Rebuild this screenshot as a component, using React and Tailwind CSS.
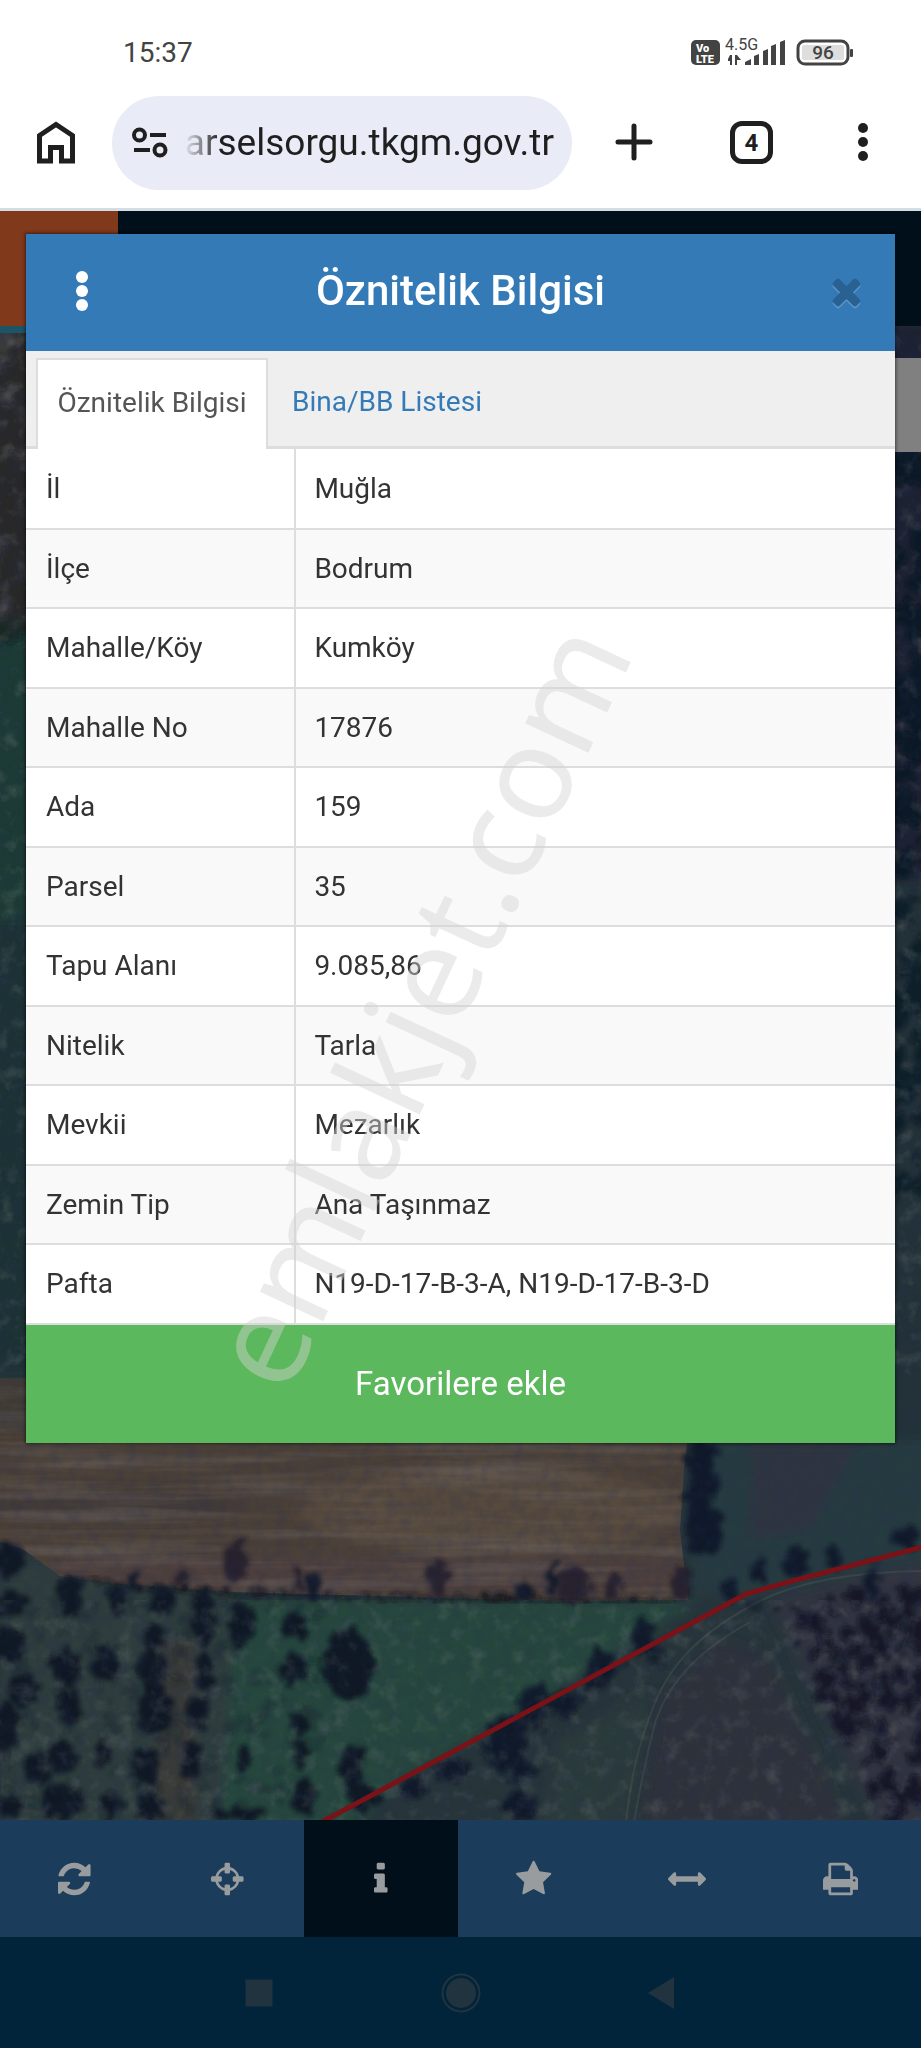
import React from "react";

const rows = [
  ["İl", "Muğla"],
  ["İlçe", "Bodrum"],
  ["Mahalle/Köy", "Kumköy"],
  ["Mahalle No", "17876"],
  ["Ada", "159"],
  ["Parsel", "35"],
  ["Tapu Alanı", "9.085,86"],
  ["Nitelik", "Tarla"],
  ["Mevkii", "Mezarlık"],
  ["Zemin Tip", "Ana Taşınmaz"],
  ["Pafta", "N19-D-17-B-3-A, N19-D-17-B-3-D"],
];

const glyphs = {
  refresh: [
    1536,
    "M1511 1056q0 5-1 7-64 268-268 434.5t-478 166.5q-146 0-282.5-55t-243.5-157l-129 129q-19 19-45 19t-45-19-19-45v-448q0-26 19-45t45-19h448q26 0 45 19t19 45-19 45l-137 137q71 66 161 102t187 36q134 0 250-65t186-179q11-17 53-117 8-23 30-23h192q13 0 22.5 9.5t9.5 22.5zm25-800v448q0 26-19 45t-45 19h-448q-26 0-45-19t-19-45 19-45l138-138q-148-137-349-137-134 0-250 65t-186 179q-11 17-53 117-8 23-30 23h-199q-13 0-22.5-9.5t-9.5-22.5v-7q65-268 270-434.5t480-166.5q146 0 284 55.5t245 156.5l130-129q19-19 45-19t45 19 19 45z",
  ],
  crosshairs: [
    1536,
    "M1197 1024h-109q-26 0-45-19t-19-45v-128q0-26 19-45t45-19h109q-32-108-112.5-188.5t-188.5-112.5v109q0 26-19 45t-45 19h-128q-26 0-45-19t-19-45v-109q-108 32-188.5 112.5t-112.5 188.5h109q26 0 45 19t19 45v128q0 26-19 45t-45 19h-109q32 108 112.5 188.5t188.5 112.5v-109q0-26 19-45t45-19h128q26 0 45 19t19 45v109q108-32 188.5-112.5t112.5-188.5zm339-192v128q0 26-19 45t-45 19h-143q-37 161-154.5 278.5t-278.5 154.5v143q0 26-19 45t-45 19h-128q-26 0-45-19t-19-45v-143q-161-37-278.5-154.5t-154.5-278.5h-143q-26 0-45-19t-19-45v-128q0-26 19-45t45-19h143q37-161 154.5-278.5t278.5-154.5v-143q0-26 19-45t45-19h128q26 0 45 19t19 45v143q161 37 278.5 154.5t154.5 278.5h143q26 0 45 19t19 45z",
  ],
  info: [
    640,
    "M640 1344v128q0 26-19 45t-45 19h-512q-26 0-45-19t-19-45v-128q0-26 19-45t45-19h64v-384h-64q-26 0-45-19t-19-45v-128q0-26 19-45t45-19h384q26 0 45 19t19 45v576h64q26 0 45 19t19 45zm-128-1152v192q0 26-19 45t-45 19h-256q-26 0-45-19t-19-45v-192q0-26 19-45t45-19h256q26 0 45 19t19 45z",
  ],
  star: [
    1664,
    "M1664 647q0 22-26 48l-363 354 86 500q1 7 1 20 0 21-10.5 35.5t-30.5 14.5q-19 0-40-12l-449-236-449 236q-22 12-40 12-21 0-31.5-14.5t-10.5-35.5q0-6 2-20l86-500-364-354q-25-27-25-48 0-37 56-46l502-73 225-455q19-41 49-41t49 41l225 455 502 73q56 9 56 46z",
  ],
  arrows: [
    1792,
    "M1792 896q0 26-19 45l-256 256q-19 19-45 19t-45-19-19-45v-128h-1024v128q0 26-19 45t-45 19-45-19l-256-256q-19-19-19-45t19-45l256-256q19-19 45-19t45 19 19 45v128h1024v-128q0-26 19-45t45-19 45 19l256 256q19 19 19 45z",
  ],
  print: [
    1664,
    "M384 1536h896v-256h-896v256zm0-640h896v-384h-160q-40 0-68-28t-28-68v-160h-640v640zm1152 64q0-26-19-45t-45-19-45 19-19 45 19 45 45 19 45-19 19-45zm128 0v416q0 13-9.5 22.5t-22.5 9.5h-224v160q0 40-28 68t-68 28h-960q-40 0-68-28t-28-68v-160h-224q-13 0-22.5-9.5t-9.5-22.5v-416q0-79 56.5-135.5t135.5-56.5h64v-544q0-40 28-68t68-28h672q40 0 88 20t76 48l152 152q28 28 48 76t20 88v256h64q79 0 135.5 56.5t56.5 135.5z",
  ],
  times: [
    1408,
    "M1298 1322q0 40-28 68l-136 136q-28 28-68 28t-68-28l-294-294-294 294q-28 28-68 28t-68-28l-136-136q-28-28-28-68t28-68l294-294-294-294q-28-28-28-68t28-68l136-136q28-28 68-28t68 28l294 294 294-294q28-28 68-28t68 28l136 136q28 28 28 68t-28 68l-294 294 294 294q28 28 28 68z",
  ],
};

function Glyph({ name, className }) {
  const [width, d] = glyphs[name];
  return (
    <svg viewBox={`0 0 ${width} 1792`} className={className} fill="currentColor" aria-hidden="true">
      <path d={d} />
    </svg>
  );
}

const tools = [
  ["refresh", "Yenile"],
  ["crosshairs", "Konumum"],
  ["info", "Bilgi"],
  ["star", "Favoriler"],
  ["arrows", "Ölçüm"],
  ["print", "Yazdır"],
];

function makeRandom(seed) {
  let s = seed;
  return () => {
    s = (s * 16807) % 2147483647;
    return s / 2147483647;
  };
}

function scatter(seed, count, x0, y0, x1, y1, rMin, rMax, keep = () => true) {
  const rnd = makeRandom(seed);
  const out = [];
  for (let i = 0; i < count; i++) {
    const x = x0 + rnd() * (x1 - x0);
    const y = y0 + rnd() * (y1 - y0);
    const r = rMin + rnd() * (rMax - rMin);
    const stretch = 0.8 + rnd() * 0.6;
    if (keep(x, y)) out.push([Math.round(x), Math.round(y), r, r * stretch]);
  }
  return out;
}

/* x, y, half width, half height */
const orchard = [
  [10, 1560, 17, 16], [70, 1596, 13, 20], [117, 1600, 8, 15], [12, 1604, 14, 14], [160, 1602, 12, 15],
  [204, 1606, 10, 18], [202, 1630, 12, 14], [242, 1626, 15, 20], [155, 1636, 11, 13],
  [294, 1626, 12, 16], [10, 1645, 18, 17], [66, 1666, 15, 20], [106, 1664, 16, 18], [152, 1670, 15, 22],
  [204, 1672, 10, 18], [292, 1670, 10, 18], [348, 1664, 26, 36], [22, 1690, 15, 17], [70, 1706, 12, 18],
  [154, 1710, 17, 22], [196, 1712, 12, 16], [6, 1728, 12, 26], [298, 1724, 8, 13], [63, 1758, 14, 16],
  [38, 1768, 12, 16], [102, 1755, 9, 13], [146, 1766, 14, 20], [244, 1760, 8, 14], [302, 1756, 7, 14],
  [352, 1766, 12, 22], [192, 1760, 8, 20], [62, 1802, 20, 18], [112, 1806, 10, 14], [150, 1806, 12, 14],
  [304, 1798, 12, 18], [364, 1798, 16, 14], [240, 1814, 28, 6], [10, 1806, 12, 12],
];

const hedge = [
  [312, 1588, 8, 13], [526, 1590, 8, 13], [552, 1578, 6, 16],
  [730, 1590, 9, 12], [132, 1584, 6, 8],
  [702, 1462, 15, 22], [698, 1500, 12, 18], [704, 1530, 19, 24], [706, 1482, 12, 16], [796, 1562, 12, 16],
  [832, 1556, 8, 13], [872, 1582, 7, 18], [906, 1536, 12, 12], [758, 1570, 8, 12],
  [536, 1704, 16, 20], [564, 1704, 12, 12], [602, 1664, 13, 18], [642, 1636, 10, 16], [508, 1738, 18, 24],
  [520, 1768, 12, 12], [500, 1758, 10, 16], [452, 1770, 20, 10], [416, 1788, 14, 10], [520, 1806, 16, 14],
  [592, 1684, 8, 8],
];

const bareTrees = [
  [237, 1562, 11, 21], [438, 1578, 10, 16], [574, 1584, 16, 18], [614, 1586, 9, 12], [682, 1582, 10, 18],
  [182, 1577, 8, 10], [298, 1580, 5, 11], [260, 1586, 5, 8],
];

const grove = scatter(77, 210, 770, 1590, 930, 1825, 3, 9, (x, y) => x > 768 + (y - 1590) * 0.52);
const verge = scatter(18, 60, 395, 1600, 760, 1800, 3, 7, (x, y) => {
  const lineX = 326 + ((1819 - y) / 225) * 420;
  return x > lineX + 6 && x < lineX + 46;
});
const leftEdge = scatter(31, 60, -6, 335, 30, 640, 5, 15);
const rightEdge = scatter(54, 80, 890, 330, 930, 1190, 5, 15);
const scrub = scatter(93, 150, 0, 1600, 320, 1820, 2, 6);

function Blobs({ items, fill, opacity = 1 }) {
  return (
    <g fill={fill} opacity={opacity}>
      {items.map(([x, y, rx, ry], i) => (
        <ellipse key={i} cx={x} cy={y} rx={rx} ry={ry} />
      ))}
    </g>
  );
}

function SatelliteMap() {
  return (
    <svg
      viewBox="0 211 921 1609"
      preserveAspectRatio="xMidYMax slice"
      className="absolute inset-0 h-full w-full"
      aria-hidden="true"
    >
      <defs>
        <filter id="rough" x="-10%" y="-10%" width="120%" height="120%">
          <feTurbulence type="fractalNoise" baseFrequency="0.09" numOctaves="3" seed="4" result="n" />
          <feDisplacementMap in="SourceGraphic" in2="n" scale="20" xChannelSelector="R" yChannelSelector="G" />
          <feGaussianBlur stdDeviation="2" />
        </filter>
        <filter id="soft">
          <feGaussianBlur stdDeviation="6" />
        </filter>
        <filter id="grain" x="0" y="0" width="100%" height="100%">
          <feTurbulence type="fractalNoise" baseFrequency="0.08" numOctaves="4" seed="9" />
          <feColorMatrix values="0 0 0 0 0.02  0 0 0 0 0.03  0 0 0 0 0.09  2 0 0 0 -0.8" />
        </filter>
        <filter id="glint" x="0" y="0" width="100%" height="100%">
          <feTurbulence type="fractalNoise" baseFrequency="0.06" numOctaves="4" seed="21" />
          <feColorMatrix values="0 0 0 0 0.38  0 0 0 0 0.37  0 0 0 0 0.36  0 2.2 0 0 -1.1" />
        </filter>
        <filter id="furrow" x="0" y="0" width="100%" height="100%">
          <feTurbulence type="fractalNoise" baseFrequency="0.005 0.09" numOctaves="3" seed="5" />
          <feColorMatrix values="0 0 0 0 0.19  0 0 0 0 0.17  0 0 0 0 0.16  2 0 0 0 -0.8" />
        </filter>
        <clipPath id="field">
          <path d="M0 1378H694L684 1470 680 1530 688 1600 560 1601 411 1597 235 1592 123 1584 60 1576 24 1550 0 1542Z" />
        </clipPath>
      </defs>

      <rect y="211" width="921" height="1609" fill="#27353a" />
      <g filter="url(#soft)">
        <rect x="-10" y="330" width="50" height="300" fill="#3a3b3c" />
        <rect x="-10" y="620" width="50" height="300" fill="#1c3b35" />
        <rect x="-10" y="920" width="50" height="450" fill="#1b3236" />
        <rect x="885" y="320" width="50" height="560" fill="#1a2231" />
        <rect x="885" y="880" width="50" height="560" fill="#223338" />
        <path d="M190 1600H700L560 1690 400 1780 350 1830H190Z" fill="#26463e" />
        <path d="M0 1560H240L220 1830H0Z" fill="#2f3e3c" />
        <path d="M700 1440H930V1560L740 1600 690 1590Z" fill="#263b40" />
        <path d="M750 1440H860L810 1530 750 1540Z" fill="#2d3540" />
        <path d="M720 1640L770 1660 850 1830H640L660 1700Z" fill="#2f323b" />
        <path d="M560 1740L650 1690 630 1830H540Z" fill="#293b3b" />
        <path d="M770 1600L930 1560V1830H880Z" fill="#30343f" />
        <path d="M160 1640h36v190h-46Z" fill="#393b39" />
      </g>

      <g clipPath="url(#field)">
        <rect y="1370" width="700" height="240" fill="#4b4038" />
        <g filter="url(#soft)">
          <rect x="-10" y="1370" width="340" height="60" fill="#403a35" />
          <ellipse cx="490" cy="1510" rx="190" ry="44" fill="#564a3d" />
          <ellipse cx="110" cy="1505" rx="140" ry="14" fill="#433b37" />
          <rect x="60" y="1556" width="620" height="36" fill="#4e413c" />
        </g>
        <rect y="1370" width="700" height="240" filter="url(#furrow)" opacity="0.42" />
      </g>
      <path d="M60 1578 123 1585 235 1593 411 1598 675 1601" fill="none" stroke="#12161b" strokeWidth="3" filter="url(#rough)" />

      <g fill="none" stroke="#4b5151" opacity="0.5">
        <path d="M921 1571C860 1572 800 1580 758 1602 705 1630 672 1660 654 1705 634 1755 630 1790 626 1822" strokeWidth="2" />
        <path d="M750 1622C700 1650 670 1680 656 1720 645 1760 640 1790 634 1822" strokeWidth="2" />
      </g>

      <g filter="url(#rough)">
        <Blobs items={scrub} fill="#12202a" opacity="0.45" />
        <Blobs items={orchard} fill="#0b1424" opacity="0.95" />
        <Blobs items={hedge} fill="#0e1728" opacity="0.92" />
        <Blobs items={bareTrees} fill="#241f2c" opacity="0.9" />
        <Blobs items={grove} fill="#0c1124" opacity="0.8" />
        <Blobs items={verge} fill="#10182a" opacity="0.75" />
        <Blobs items={leftEdge} fill="#10141c" opacity="0.5" />
        <Blobs items={rightEdge} fill="#0a1020" opacity="0.6" />
      </g>

      <path d="M0 333H921V1376H0Z" filter="url(#glint)" opacity="0.25" />
      <rect y="1600" width="921" height="220" filter="url(#glint)" opacity="0.2" />
      <rect y="333" width="921" height="1487" filter="url(#grain)" opacity="0.25" />
      <path d="M322 1822 746 1594 796 1580 926 1546" fill="none" stroke="#7a1218" strokeWidth="5" strokeLinejoin="round" />
    </svg>
  );
}

function StatusBar() {
  return (
    <div className="flex h-[94px] items-center justify-between pt-3 pr-[65px] pl-[123px] text-[#434343]">
      <span className="text-[28px] leading-8">15:37</span>
      <svg viewBox="0 -4 166 40" className="h-10 w-[166px]" fill="currentColor" fontFamily="Roboto, sans-serif">
        <rect x="1" y="3" width="29" height="25" rx="5" />
        <text x="6" y="15" fontSize="11" fontWeight="900" fill="#fff">Vo</text>
        <text x="6" y="26" fontSize="11" fontWeight="900" fill="#fff">LTE</text>
        <text x="35" y="13" fontSize="16">4.5G</text>
        <path d="M42 18v10h-2v-4h-2v-2l2-4zM45 18h2v10h-2zM47 18l4 5h-4z" />
        <path d="M55 28v-3l6-3v6zM64 28v-9l5-2v11zM73 28v-14l5-2v16zM81 28v-19l5-2v21zM90 28v-23l5-2v25z" />
        <rect x="108" y="4" width="50" height="23" rx="7" fill="none" stroke="currentColor" strokeWidth="3" />
        <rect x="112" y="8" width="42" height="15" rx="2" fill="#dedede" />
        <rect x="160" y="12" width="3" height="8" rx="1" />
        <text x="133" y="22" fontSize="19" fontWeight="500" textAnchor="middle">96</text>
      </svg>
    </div>
  );
}

function BrowserBar() {
  return (
    <div className="flex h-[114px] items-start pl-8 text-[#1f1f1f]">
      <button type="button" aria-label="Ana sayfa" className="mt-6 h-12 w-12">
        <svg viewBox="0 0 48 48" className="h-12 w-12" fill="none" stroke="currentColor" strokeWidth="5">
          <path d="M7.500 43V17.500L24 6.500 40.500 17.500V43H29.500V29.500H18.500V43Z" />
        </svg>
      </button>
      <div className="mt-0.5 ml-8 flex h-[94px] min-w-0 flex-1 items-center rounded-full bg-[#e9ecf6] pr-[18px] pl-5">
        <svg viewBox="0 0 36 32" className="h-8 w-9 shrink-0" fill="none" stroke="currentColor" strokeWidth="4">
          <circle cx="7.500" cy="8" r="5.500" />
          <path d="M18 8H34M2 23H18" />
          <circle cx="28" cy="23" r="5.500" />
        </svg>
        <div className="ml-4 flex min-w-0 flex-1 justify-end overflow-hidden [mask-image:linear-gradient(to_right,transparent,black_36px)]">
          <span className="text-[37px] leading-12 whitespace-nowrap">arselsorgu.tkgm.gov.tr</span>
        </div>
      </div>
      <button type="button" aria-label="Yeni sekme" className="mt-6 ml-[38px] h-12 w-12">
        <svg viewBox="0 0 48 48" className="h-12 w-12" stroke="currentColor" strokeWidth="5" strokeLinecap="round">
          <path d="M24 8V40M8 24H40" />
        </svg>
      </button>
      <button
        type="button"
        aria-label="Sekmeler"
        className="mt-[27px] ml-[72px] flex h-[43px] w-[43px] items-center justify-center rounded-xl border-5 border-current text-2xl leading-6 font-bold"
      >
        4
      </button>
      <button type="button" aria-label="Menü" className="mt-6 mr-[34px] ml-[66px] h-12 w-12">
        <svg viewBox="0 0 48 48" className="h-12 w-12" fill="currentColor">
          <circle cx="24" cy="10" r="5" />
          <circle cx="24" cy="24" r="5" />
          <circle cx="24" cy="38" r="5" />
        </svg>
      </button>
    </div>
  );
}

function InfoPanel() {
  return (
    <section className="relative bg-white shadow-[0_0_3px_1px_rgba(0,0,0,0.5)]">
      <div className="flex h-[117px] items-center justify-between bg-[#337ab7] px-8 pb-1 text-white">
        <button type="button" aria-label="Seçenekler" className="h-12 w-12">
          <svg viewBox="0 0 48 48" className="h-12 w-12" fill="currentColor">
            <circle cx="24" cy="10" r="6" />
            <circle cx="24" cy="24" r="6" />
            <circle cx="24" cy="38" r="6" />
          </svg>
        </button>
        <h1 className="text-[42px] leading-12 font-medium">Öznitelik Bilgisi</h1>
        <button type="button" aria-label="Kapat" className="flex w-12 justify-end text-[#296292]">
          <Glyph name="times" className="h-[42px] drop-shadow-[0_2px_0_#5c95c5]" />
        </button>
      </div>

      <div className="flex h-[98px] items-end border-b-3 border-[#ddd] bg-[#efefef] pl-2.5 text-[28px] leading-8">
        <button
          type="button"
          className="-mb-[3px] flex h-[91px] w-[232px] items-center justify-center border-2 border-b-0 border-[#ddd] bg-white pb-1 text-[#555]"
        >
          Öznitelik Bilgisi
        </button>
        <button type="button" className="flex h-[88px] items-center px-6 text-[#337ab7]">
          Bina/BB Listesi
        </button>
      </div>

      <table className="w-full table-fixed border-collapse text-[28px] leading-8 text-[#333]">
        <tbody>
          {rows.map(([label, value]) => (
            <tr key={label} className="odd:h-20 odd:bg-white even:h-[79px] even:bg-[#f9f9f9]">
              <th scope="row" className="w-[31%] border-r-2 border-b-2 border-[#ddd] px-5 text-left font-normal">
                {label}
              </th>
              <td className="border-b-2 border-[#ddd] px-[18px]">{value}</td>
            </tr>
          ))}
        </tbody>
      </table>

      <button type="button" className="h-[118px] w-full bg-[#5cb85c] text-[33px] leading-10 text-white">
        Favorilere ekle
      </button>

      <div className="pointer-events-none absolute inset-0 flex items-center justify-center pt-[330px] pr-[90px]">
        <span
          className="-rotate-[65deg] text-[130px] leading-none whitespace-nowrap text-[#d2d2d2]/45"
          style={{ fontFamily: '"Noto Sans", sans-serif' }}
        >
          emlakjet.com
        </span>
      </div>
    </section>
  );
}

export default function App() {
  return (
    <div className="flex min-h-screen flex-col overflow-hidden bg-white font-[Roboto,sans-serif]">
      <header className="border-b-3 border-[#d3dde4]">
        <StatusBar />
        <BrowserBar />
      </header>

      <main className="relative flex-1 overflow-hidden bg-[#1d2a33]">
        <SatelliteMap />
        <div className="absolute inset-x-0 top-0 flex h-[122px] items-start">
          <div className="h-full w-[118px] border-b-7 border-[#1c5566] bg-[#80391b]" />
          <div className="h-[115px] flex-1 bg-[#000f1a]" />
        </div>
        <div className="absolute top-[147px] right-0 h-[94px] w-16 bg-[#808080]" />
        <div className="relative px-[26px] pt-[23px]">
          <InfoPanel />
        </div>
      </main>

      <nav className="bg-[#1b3d5b]">
        <div className="-ml-0.5 grid grid-cols-6 pr-1">
          {tools.map(([name, label]) => (
            <button
              key={name}
              type="button"
              aria-label={label}
              className={`flex h-[117px] items-center justify-center text-[#999c9f] ${name === "info" ? "bg-[#000f1a]" : ""}`}
            >
              <Glyph name={name} className="h-[38px]" />
            </button>
          ))}
        </div>
      </nav>

      <footer className="flex h-[111px] items-center justify-center gap-[164px] bg-[#01243b] text-[#21333e]">
        <button type="button" aria-label="Son uygulamalar" className="h-9 w-9">
          <svg viewBox="0 0 36 36" className="h-9 w-9" fill="currentColor">
            <rect x="4.500" y="4.500" width="27" height="27" />
          </svg>
        </button>
        <button type="button" aria-label="Ana ekran" className="h-10 w-10">
          <svg viewBox="0 0 40 40" className="h-10 w-10" fill="currentColor">
            <circle cx="20" cy="20" r="15" />
            <circle cx="20" cy="20" r="18.500" fill="none" stroke="currentColor" strokeWidth="2" />
          </svg>
        </button>
        <button type="button" aria-label="Geri" className="h-9 w-9">
          <svg viewBox="0 0 36 36" className="h-9 w-9" fill="currentColor">
            <path d="M29 2V34L3 18Z" />
          </svg>
        </button>
      </footer>
    </div>
  );
}
